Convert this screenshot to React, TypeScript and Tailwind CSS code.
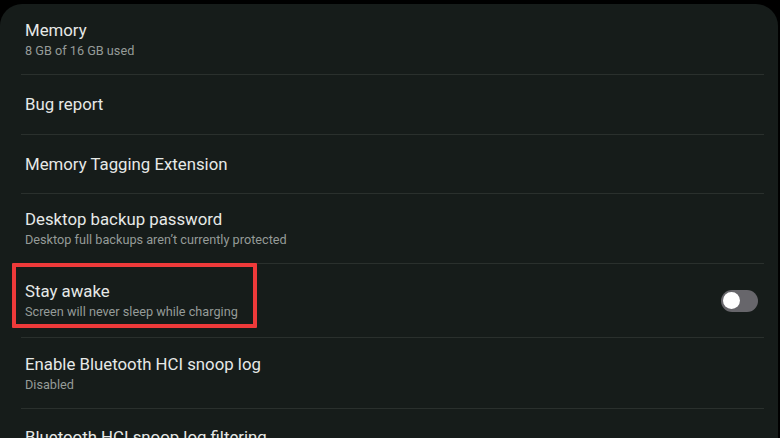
import React from "react";

type Row = { title: string; sub?: string; h: string; toggle?: boolean };

const rows: Row[] = [
  { title: "Memory", sub: "8 GB of 16 GB used", h: "h-[71px]" },
  { title: "Bug report", h: "h-[60px]" },
  { title: "Memory Tagging Extension", h: "h-[59px]" },
  { title: "Desktop backup password", sub: "Desktop full backups aren\u2019t currently protected", h: "h-[70px]" },
  { title: "Stay awake", sub: "Screen will never sleep while charging", h: "h-[74px]", toggle: true },
  { title: "Enable Bluetooth HCI snoop log", sub: "Disabled", h: "h-[71px]" },
];

export default function App() {
  return (
    <div className="relative w-[780px] h-[438px] overflow-hidden bg-black" style={{ fontFamily: "Roboto, 'Noto Sans', sans-serif" }}>
      <div className="mt-[4px] mr-[2px] h-[434px] rounded-t-[22px] bg-[#161c1a]">
        {rows.map((r) => (
          <div key={r.title} className={`${r.h} ml-[21px] mr-[14px] border-b border-[#2a302d] flex items-center`}>
            <div className="flex-1 pl-[4px] flex flex-col justify-center">
              <div className="text-[16.8px] leading-[21px] text-[#e6e9e7]">{r.title}</div>
              {r.sub && <div className="mt-[2px] text-[12.7px] leading-[16px] text-[#959b98]">{r.sub}</div>}
            </div>
            {r.toggle && (
              <div className="mr-[6px] w-[37px] h-[22px] rounded-full bg-[#67666b] flex items-center pl-[2px]">
                <div className="w-[17px] h-[17px] rounded-full bg-white" />
              </div>
            )}
          </div>
        ))}
        <div className="ml-[21px] mr-[14px] pl-[4px] pt-[18px]">
          <div className="text-[16.8px] leading-[21px] text-[#e6e9e7]">Bluetooth HCI snoop log filtering</div>
        </div>
      </div>
      <div className="absolute left-[12px] top-[263px] w-[245px] h-[65px] border-4 border-[#ee3a3a] rounded-[1px]" />
    </div>
  );
}
